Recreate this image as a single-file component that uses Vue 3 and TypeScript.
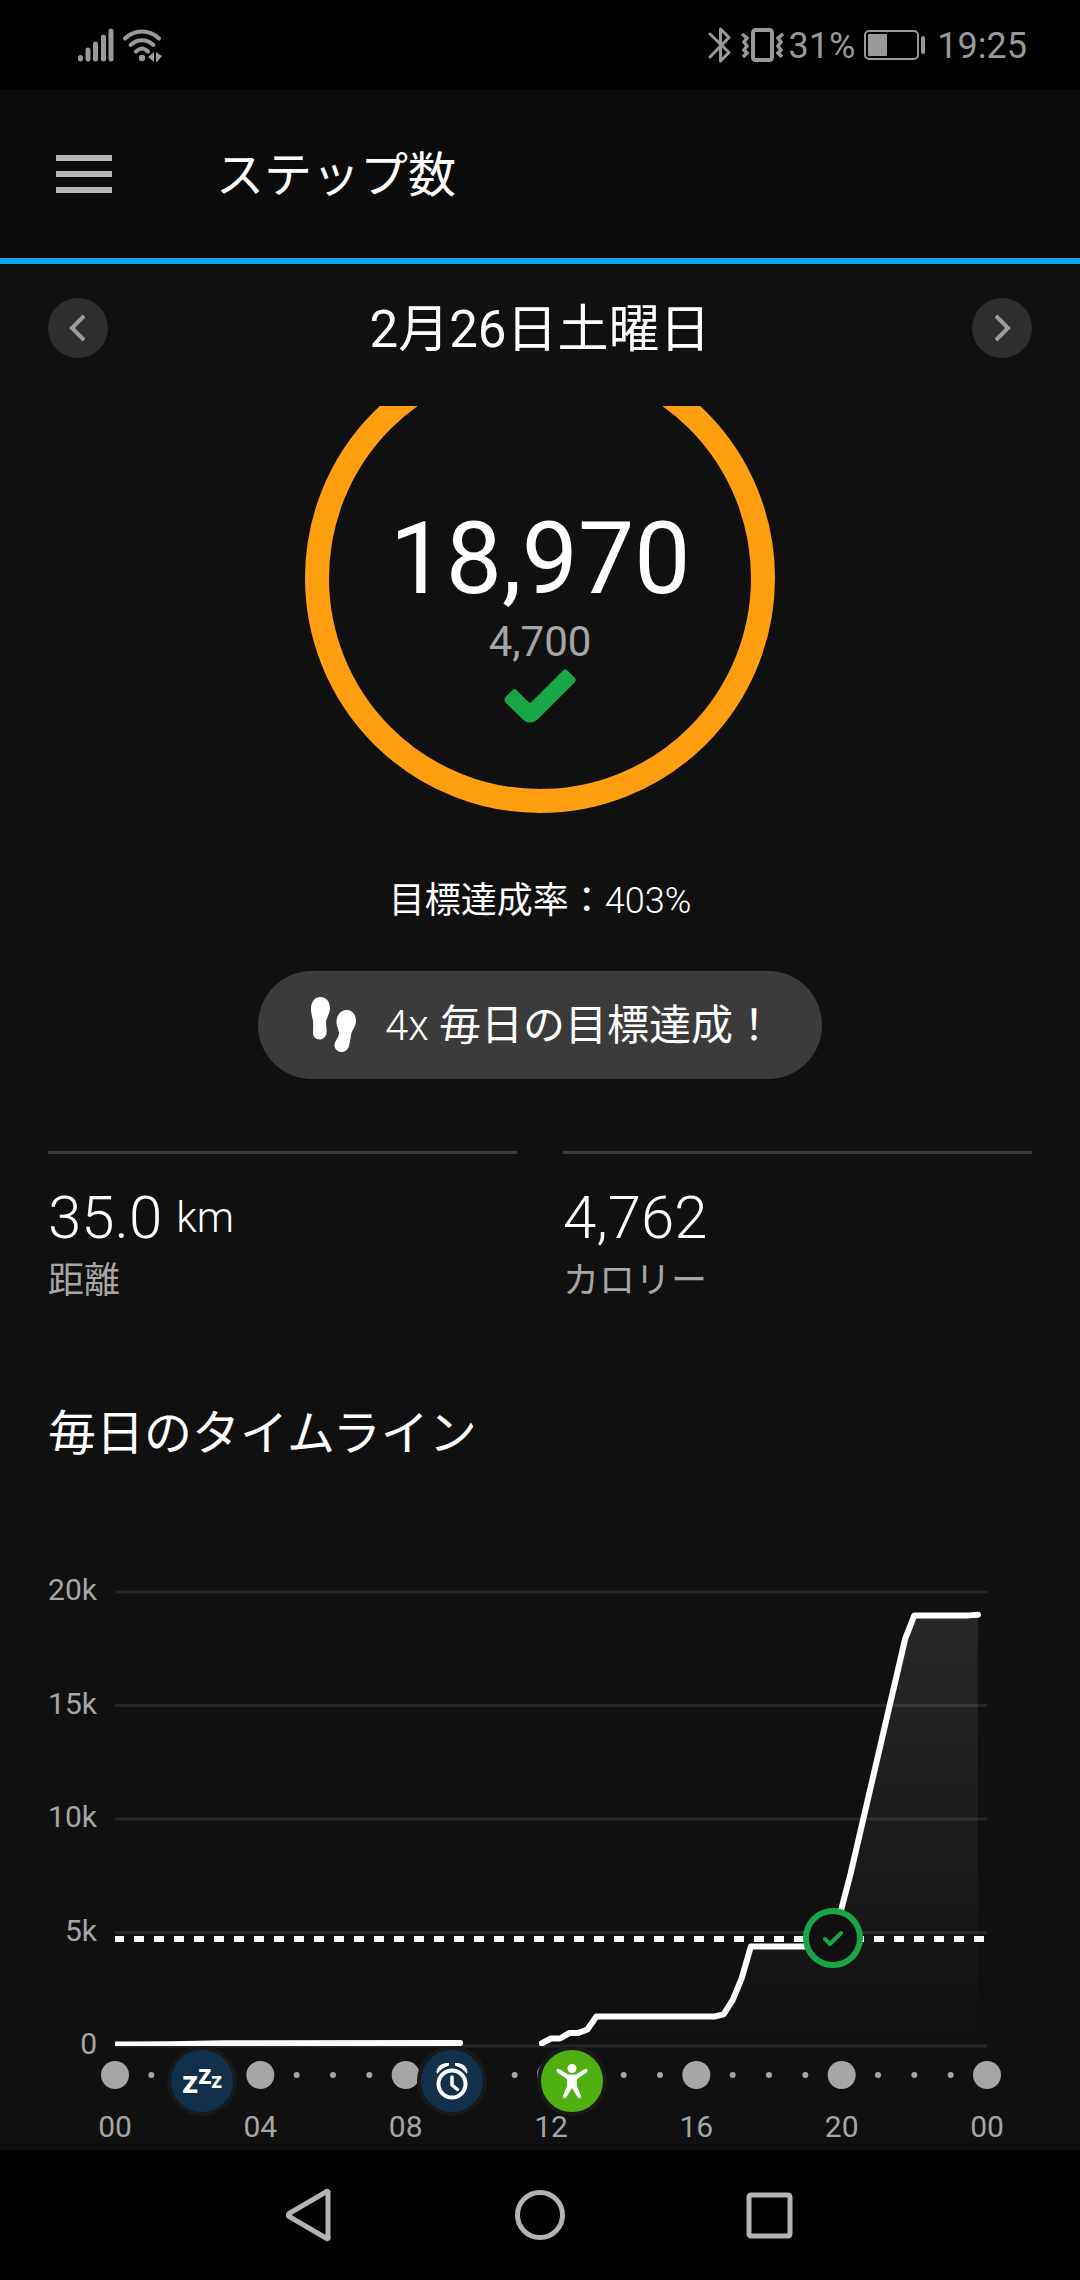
<script setup lang="ts">
interface Sample {
  hour: number
  steps: number
}

const plotLeft = 115
const plotRight = 987
const baseY = 582
const hourWidth = (plotRight - plotLeft) / 24
const stepHeight = 0.0227

const toX = (hour: number): number => plotLeft + hour * hourWidth
const toY = (steps: number): number => baseY - steps * stepHeight

const samples = (pairs: [number, number][]): Sample[] =>
  pairs.map(([hour, steps]) => ({ hour, steps }))

const morning = samples([[0, 70], [1.5, 80], [3, 120], [9.5, 130]])
const day = samples([
  [11.75, 120], [12, 330], [12.25, 330], [12.5, 570], [12.75, 570], [13, 730],
  [13.25, 1300], [16.5, 1300], [16.75, 1390], [17, 2020], [17.25, 2990],
  [17.5, 4380], [19.5, 4380], [19.75, 4740], [20, 6080], [20.25, 7620],
  [21.75, 17950], [22, 18970], [23.5, 18970], [23.75, 19000],
])

const toPoints = (list: Sample[]): string =>
  list.map((s) => `${toX(s.hour)},${toY(s.steps)}`).join(' ')

const areaPoints = `${toX(11.75)},${baseY} ${toPoints(day)} ${toX(23.75)},${baseY}`

const yTicks = [
  { label: '20k', steps: 20000 },
  { label: '15k', steps: 15000 },
  { label: '10k', steps: 10000 },
  { label: '5k', steps: 5000 },
  { label: '0', steps: 0 },
]

const hours = Array.from({ length: 25 }, (_, h) => h)
const majorHours = hours.filter((h) => h % 4 === 0)
const minorHours = hours.filter((h) => h % 4 !== 0)
const hourLabel = (h: number): string => String(h % 24).padStart(2, '0')
</script>

<template>
  <div class="screen">
    <div class="status">
      <svg class="signal" width="84" height="34" viewBox="0 0 84 34" fill="none" stroke="currentColor" stroke-linecap="round">
        <g stroke-width="5">
          <path d="M2.5 29.5v1.5M10 22v9M17.5 16v15M25.500 9v22M33 3v28" />
        </g>
        <g stroke-width="4">
          <path d="M47 10.500C56 1 72 1 81 10.500M52.500 17C59.500 10.500 68.500 10.500 75.500 17M58 23.500C62 19.500 66 19.500 70 23.500" />
        </g>
        <circle cx="64" cy="30" r="3.200" fill="currentColor" stroke="none" />
        <path d="M76 24v10l-6-5zM78 24v10h1l5-6z" fill="currentColor" stroke="none" />
      </svg>
      <div class="status-right">
        <svg width="76" height="36" viewBox="0 0 76 36" fill="none" stroke="currentColor">
          <path d="M2 7l19 18.500-8.500 8.500V2l8.500 8.500L2 30" stroke-width="3" stroke-linejoin="round" stroke-linecap="round" />
          <rect x="45" y="3" width="19" height="30" rx="2.500" stroke-width="4" />
          <path d="M34 7l5 4-3 4 3 4-3 4 3 3-4 4M75 7l-5 4 3 4-3 4 3 4-3 3 4 4" stroke-width="3.500" />
        </svg>
        <span class="status-text">31%</span>
        <svg width="62" height="30" viewBox="0 0 62 30">
          <rect x="1" y="1" width="53" height="28" rx="4" fill="none" stroke="currentColor" stroke-width="2" />
          <rect x="4" y="4" width="19" height="22" rx="1" fill="currentColor" />
          <rect x="57" y="6" width="4" height="18" rx="2" fill="currentColor" />
        </svg>
        <span class="status-text clock">19:25</span>
      </div>
    </div>

    <header class="appbar">
      <button class="menu" type="button" aria-label="メニュー">
        <span></span><span></span><span></span>
      </button>
      <h1>ステップ数</h1>
    </header>

    <div class="date-row">
      <button class="round" type="button" aria-label="前の日">
        <svg width="60" height="60" viewBox="0 0 60 60"><path d="M36 18L24 30l12 12" /></svg>
      </button>
      <span class="date">2月26日土曜日</span>
      <button class="round" type="button" aria-label="次の日">
        <svg width="60" height="60" viewBox="0 0 60 60"><path d="M24 18l12 12-12 12" /></svg>
      </button>
    </div>

    <main>
      <div class="ring-window">
        <div class="ring">
          <span class="count">18,970</span>
          <span class="target">4,700</span>
          <svg class="check" width="72" height="54" viewBox="0 0 72 54">
            <path d="M2 27.500L8 21.500Q10.500 19 13 21.500L24.500 33Q26 34.500 27.500 33L59 1.500Q61 -0.500 63.500 1.500L70.500 8.500Q73 11 70.500 13.500L33 51Q30 53.500 26 53.500Q22 53.500 19.500 51L1.500 33.500Q-1 30.500 2 27.500Z" />
          </svg>
        </div>
      </div>

      <p class="rate">目標達成率：<span class="light">403%</span></p>

      <div class="badge">
        <svg width="46" height="56" viewBox="0 0 46 56" fill="#fff">
          <path d="M9.500 0C15.500 0 19 5 19 11.500C19 17 15 21 15 25.500C15 29 16 33 15.500 36C15 40 12 42.500 8.500 42.500C4.500 42.500 2 39.500 2 36C2 32 2.500 28 2 24C1.500 20 0 17 0 12C0 4.500 4 0 9.500 0Z" />
          <path d="M35.500 13C41.500 13 45 18 45 24C45 29.500 41 33 40 38C39.500 41.500 39 45 38 49C37 52.500 34 55 30.500 55C26.500 55 23.500 52 23.500 48.500C23.500 44 28 40.500 28 36C28 32.500 25.500 30 25.500 25C25.500 18 30 13 35.500 13Z" />
        </svg>
        <span class="badge-text"><span class="light">4x </span>毎日の目標達成！</span>
      </div>

      <div class="stats">
        <div class="stat">
          <div class="value"><span>35.0</span><span class="unit">km</span></div>
          <div class="label">距離</div>
        </div>
        <div class="stat">
          <div class="value"><span>4,762</span></div>
          <div class="label">カロリー</div>
        </div>
      </div>

      <h2>毎日のタイムライン</h2>

      <svg class="chart" viewBox="0 0 1080 686" role="img" aria-label="毎日のタイムライン">
        <defs>
          <linearGradient id="area" x1="0" y1="0" x2="0" y2="1">
            <stop offset="0" stop-color="#fff" stop-opacity="0.1" />
            <stop offset="1" stop-color="#fff" stop-opacity="0" />
          </linearGradient>
          <clipPath id="plot"><rect x="115" y="100" width="872" height="482" /></clipPath>
        </defs>

        <g v-for="t in yTicks" :key="t.label">
          <line class="grid" :x1="plotLeft" :x2="plotRight" :y1="toY(t.steps)" :y2="toY(t.steps)" />
          <text class="tick" x="97" :y="toY(t.steps) + 8" text-anchor="end">{{ t.label }}</text>
        </g>

        <polygon :points="areaPoints" fill="url(#area)" />
        <line class="goal" x1="114" x2="987" y1="475" y2="475" clip-path="url(#plot)" />
        <g clip-path="url(#plot)">
          <polyline class="steps" :points="toPoints(morning)" />
          <polyline class="steps" :points="toPoints(day)" />
        </g>

        <circle v-for="h in majorHours" :key="'d' + h" class="dot" :cx="toX(h)" cy="611" r="14" />
        <circle v-for="h in minorHours" :key="'s' + h" class="dot" :cx="toX(h)" cy="611" r="3" />
        <text v-for="h in majorHours" :key="'t' + h" class="tick" :x="toX(h)" y="673" text-anchor="middle">{{ hourLabel(h) }}</text>

        <g transform="translate(833 474)">
          <circle r="27" fill="#101010" stroke="#1aa546" stroke-width="6" />
          <path d="M-8 1l5 5L8-5" fill="none" stroke="#1aa546" stroke-width="4" stroke-linecap="round" stroke-linejoin="round" />
        </g>

        <g transform="translate(202 617)">
          <circle class="sleep" r="33" />
          <g class="zzz">
            <text x="-20" y="12" font-size="32">z</text>
            <text x="-4" y="3" font-size="27">z</text>
            <text x="9" y="7" font-size="22">z</text>
          </g>
        </g>

        <g transform="translate(452 617)">
          <circle class="sleep" r="33" />
          <g fill="none" stroke="#fff" stroke-linecap="round">
            <circle cy="3" r="13.500" stroke-width="4" />
            <path d="M0-4V4l5.500 4.500" stroke-width="3.500" stroke-linejoin="round" />
          </g>
          <path d="M-15-7C-17-13-11-19-3-18L-3-15.500C-8-14-12-11-15-7ZM15-7C17-13 11-19 3-18L3-15.500C8-14 12-11 15-7Z" fill="#fff" />
        </g>

        <g transform="translate(572 617)">
          <circle class="active" r="33" />
          <circle cy="-12.500" r="4.500" fill="#fff" />
          <path d="M-15-12C-16-10-15.500-9.500-14-8L-5-2V5L-9 15C-9 17.500-6.500 18-5.500 16L0 7L5.500 16C6.500 18 9 17.500 9 15L5 5V-2L14-8C15.500-9.500 16-10 15-12C14.500-12.500 13.500-12.500 12-11.500L4-6.500H-4L-12-11.500C-13.500-12.500-14.500-12.500-15-12Z" fill="#fff" />
        </g>
      </svg>
    </main>

    <nav class="sysnav">
      <button type="button" aria-label="戻る">
        <svg width="56" height="56" viewBox="0 0 56 56"><path d="M46 6v44a1 1 0 0 1-2 1L7 29.500a2 2 0 0 1 0-3L44 5a1 1 0 0 1 2 1z" /></svg>
      </button>
      <button type="button" aria-label="ホーム">
        <svg width="56" height="56" viewBox="0 0 56 56"><circle cx="28" cy="28" r="22.500" /></svg>
      </button>
      <button type="button" aria-label="最近のアプリ">
        <svg width="56" height="56" viewBox="0 0 56 56"><rect x="7" y="8" width="41" height="41" rx="2" /></svg>
      </button>
    </nav>
  </div>
</template>

<style>
body {
  margin: 0;
  background: #000;
}
</style>

<style scoped>
.screen {
  display: flex;
  flex-direction: column;
  min-height: 100vh;
  background: #101010;
  color: #fff;
  font-family: Roboto, "Noto Sans CJK JP", sans-serif;
  font-weight: 400;
}
svg {
  display: block;
  flex: none;
}
button {
  margin: 0;
  padding: 0;
  border: 0;
  background: none;
  cursor: pointer;
}
h1, h2, p {
  margin: 0;
  font-weight: 400;
}
.light {
  font-weight: 300;
}

.status {
  display: flex;
  align-items: center;
  justify-content: space-between;
  height: 90px;
  padding: 0 53px 0 78px;
  background: #000;
  color: #999;
}
.status-right {
  display: flex;
  align-items: center;
}
.status-text {
  margin: 0 9px 0 5px;
  padding-top: 2px;
  font-size: 36px;
  line-height: 44px;
}
.clock {
  margin: 0 0 0 11px;
}

.appbar {
  display: flex;
  align-items: center;
  gap: 104px;
  height: 168px;
  padding: 0 56px;
  border-bottom: 6px solid #11a5ee;
  background: #0b0b0b;
}
.menu {
  display: flex;
  flex-direction: column;
  gap: 10px;
  width: 56px;
}
.menu span {
  height: 6px;
  background: #b8b8b8;
}
h1 {
  padding-top: 4px;
  font-size: 48px;
  line-height: 60px;
}

.date-row {
  display: flex;
  align-items: center;
  justify-content: space-between;
  height: 60px;
  padding: 34px 48px 48px;
}
.round {
  width: 60px;
  height: 60px;
  border-radius: 50%;
  background: #2e2e2e;
}
.round path {
  fill: none;
  stroke: #9c9c9c;
  stroke-width: 4;
}
.date {
  padding-top: 4px;
  font-size: 51px;
  line-height: 60px;
}

main {
  display: flex;
  flex-direction: column;
  align-items: center;
}
.ring-window {
  overflow: hidden;
}
.ring {
  display: flex;
  flex-direction: column;
  align-items: center;
  box-sizing: border-box;
  width: 470px;
  height: 470px;
  margin-top: -63px;
  padding-top: 134px;
  border: 24px solid #ff9f0f;
  border-radius: 50%;
}
.count {
  font-size: 100px;
  line-height: 116px;
}
.target {
  color: #a6a6a6;
  font-size: 42px;
  line-height: 50px;
}
.check {
  margin-top: 2px;
  fill: #1aa546;
}
.rate {
  margin-top: 61px;
  font-size: 36px;
  line-height: 54px;
}
.badge {
  display: flex;
  align-items: center;
  gap: 28px;
  height: 108px;
  margin-top: 43px;
  padding: 0 47px 0 53px;
  border-radius: 54px;
  background: #3b3b3b;
}
.badge-text {
  padding-top: 2px;
  font-size: 42px;
  line-height: 54px;
}

.stats {
  display: grid;
  grid-template-columns: 1fr 1fr;
  gap: 46px;
  box-sizing: border-box;
  width: 100%;
  margin-top: 72px;
  padding: 0 48px;
}
.stat {
  padding-top: 28px;
  border-top: 3px solid #3b3b3b;
}
.value {
  display: flex;
  gap: 14px;
  font-size: 60px;
  font-weight: 300;
  line-height: 72px;
}
.unit {
  font-size: 42px;
}
.label {
  color: #a6a6a6;
  font-size: 36px;
  line-height: 54px;
}
h2 {
  align-self: flex-start;
  margin: 96px 48px 0;
  font-size: 48px;
  line-height: 60px;
}

.chart {
  width: 100%;
}
.grid {
  stroke: #262626;
  stroke-width: 3;
}
.tick {
  fill: #a6a6a6;
  font-size: 30px;
}
.goal {
  stroke: #fff;
  stroke-width: 6;
  stroke-dasharray: 10 10;
}
.steps {
  fill: none;
  stroke: #fff;
  stroke-width: 6;
  stroke-linecap: round;
  stroke-linejoin: round;
}
.dot {
  fill: #a6a6a6;
}
.sleep, .active {
  stroke: #191919;
  stroke-width: 4;
}
.sleep {
  fill: #10304b;
}
.active {
  fill: #50b012;
}
.zzz {
  fill: #fff;
  font-weight: 700;
}

.sysnav {
  display: flex;
  flex: 1;
  align-items: center;
  justify-content: center;
  min-height: 130px;
  background: #000;
}
.sysnav button {
  display: flex;
  justify-content: center;
  width: 230px;
}
.sysnav svg {
  fill: none;
  stroke: #b4b4b4;
  stroke-width: 5;
}
</style>
